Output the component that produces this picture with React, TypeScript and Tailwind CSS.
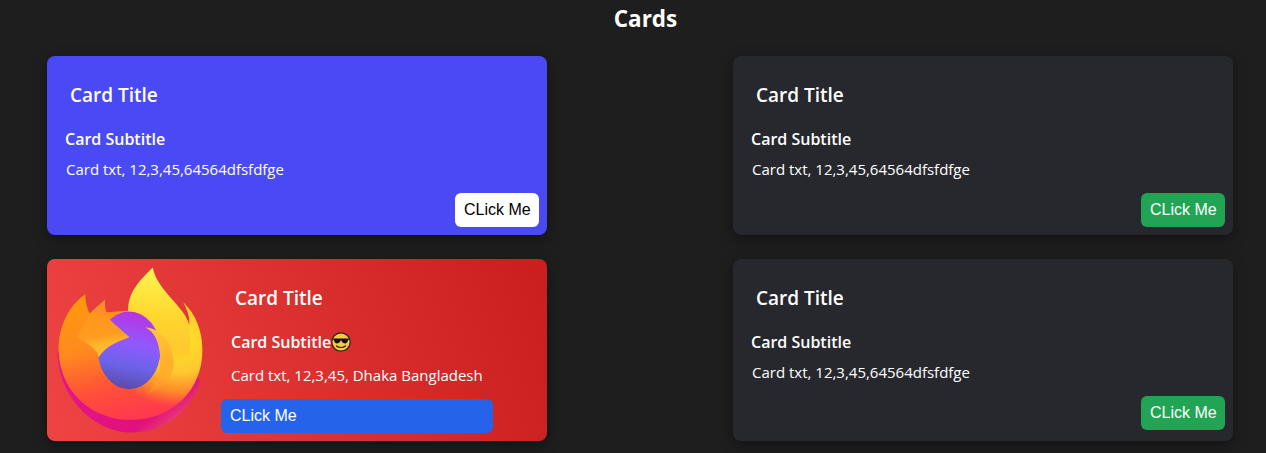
const BODY_FONT = "font-['Open_Sans','Noto_Sans',sans-serif]";

function FirefoxLogo() {
  return (
    <svg viewBox="50 45 445 510" className="h-[170px] w-[148px]">
      <defs>
        <linearGradient id="ffBase" x1="0.2" y1="0.4" x2="0.9" y2="0.9">
          <stop offset="0" stopColor="#e31587" />
          <stop offset="0.7" stopColor="#e0107c" />
          <stop offset="1" stopColor="#ef4f6e" />
        </linearGradient>
        <linearGradient id="ffBody" x1="0.3" y1="0" x2="0.55" y2="1">
          <stop offset="0" stopColor="#ff980e" />
          <stop offset="0.4" stopColor="#ff8a1e" />
          <stop offset="0.72" stopColor="#ff5038" />
          <stop offset="1" stopColor="#ff3750" />
        </linearGradient>
        <radialGradient id="ffGlow" cx="0.85" cy="0.35" r="0.55">
          <stop offset="0" stopColor="#ffe226" />
          <stop offset="0.5" stopColor="#ffc830" />
          <stop offset="0.78" stopColor="#ff9a26" stopOpacity="0.8" />
          <stop offset="1" stopColor="#ff8a1e" stopOpacity="0" />
        </radialGradient>
        <linearGradient id="ffFlame" x1="0.5" y1="0" x2="0.5" y2="1">
          <stop offset="0" stopColor="#fff44f" />
          <stop offset="0.4" stopColor="#ffd52e" />
          <stop offset="0.58" stopColor="#ffc830" stopOpacity="0.85" />
          <stop offset="0.72" stopColor="#ffb02a" stopOpacity="0" />
        </linearGradient>
        <linearGradient id="ffGlobe" x1="0.55" y1="0" x2="0.4" y2="1">
          <stop offset="0" stopColor="#b833e1" />
          <stop offset="0.4" stopColor="#9059ff" />
          <stop offset="0.7" stopColor="#6a63e8" />
          <stop offset="1" stopColor="#5b4aa8" />
        </linearGradient>
        <linearGradient id="ffWrap" x1="0.3" y1="0" x2="0.5" y2="1">
          <stop offset="0" stopColor="#ffc83a" />
          <stop offset="0.6" stopColor="#ffb02a" />
          <stop offset="1" stopColor="#ff9a26" stopOpacity="0.2" />
        </linearGradient>
        <linearGradient id="ffFox" x1="0.4" y1="0" x2="0.6" y2="1">
          <stop offset="0" stopColor="#ff961c" />
          <stop offset="0.5" stopColor="#ff9c20" />
          <stop offset="0.72" stopColor="#ffb82e" />
          <stop offset="1" stopColor="#ffbd2e" />
        </linearGradient>
      </defs>
      <path d="M52 305C52 440 160 548 275 548C370 548 450 490 480 395L440 300L100 300Z" fill="url(#ffBase)" />
      <path d="M135 132C85 165 52 235 55 305C60 430 160 512 275 510C395 510 488 420 487 300C487 240 465 190 430 157C445 185 450 205 448 225L300 180L148 190C138 170 135 150 135 132Z" fill="url(#ffBody)" />
      <path d="M135 132C85 165 52 235 55 305C60 430 160 512 275 510C395 510 488 420 487 300C487 240 465 190 430 157C445 185 450 205 448 225L300 180L148 190C138 170 135 150 135 132Z" fill="url(#ffGlow)" />
      <path d="M148 190C165 175 180 160 195 148C192 170 198 190 208 208L170 200Z" fill="#ff8f2a" />
      <path d="M338 52C300 90 262 125 264 185L267 425C330 460 420 430 448 340C452 300 450 260 448 225C435 170 350 120 338 52Z" fill="url(#ffFlame)" />
      <ellipse cx="267" cy="301" rx="94" ry="117" fill="url(#ffGlobe)" />
      <path d="M316 232C365 235 400 285 401 340C400 385 365 420 320 432C348 405 362 370 360 320C358 280 345 245 316 232Z" fill="url(#ffWrap)" />
      <path d="M148 190C175 188 195 195 205 205C225 225 250 245 268 262C235 275 200 285 175 322C172 300 150 285 108 262C118 245 135 210 148 190Z" fill="url(#ffFox)" />
    </svg>
  );
}

function SunglassesEmoji() {
  return (
    <svg viewBox="0 0 20 20" className="h-5 w-5 shrink-0" role="img" aria-label="😎">
      <circle cx="10" cy="10" r="9.2" fill="#fcc93f" stroke="#2a2118" strokeWidth="1.2" />
      <path d="M1.5 6.5H18.5V7.6L17 8C16.8 10.4 15.6 11.4 13.8 11.4C12 11.4 10.8 10.2 10.4 8.6H9.6C9.2 10.2 8 11.4 6.2 11.4C4.4 11.4 3.2 10.4 3 8L1.5 7.6Z" fill="#15131a" />
      <path d="M5.5 14C7.5 16 12.5 16 14.5 14" fill="none" stroke="#2a2118" strokeWidth="1.2" strokeLinecap="round" />
    </svg>
  );
}

function ClickButton({ className }: { className: string }) {
  return (
    <button className={`h-[34px] rounded-md px-[9px] text-left font-['Liberation_Sans',sans-serif] text-base whitespace-nowrap ${className}`}>
      CLick Me
    </button>
  );
}

function PlainCard({ className, buttonClass }: { className: string; buttonClass: string }) {
  return (
    <div className={`flex w-[500px] flex-col rounded-lg p-2 text-white shadow-[0_4px_14px_rgba(0,0,0,0.4)] ${className}`}>
      <h2 className="mt-[17px] ml-[15px] text-[19px] leading-7 font-semibold">Card Title</h2>
      <h3 className="mt-[18px] ml-[10px] text-base leading-6 font-semibold">Card Subtitle</h3>
      <p className="mt-[7px] ml-[10px] pl-px text-[15px] leading-[22px]">Card txt, 12,3,45,64564dfsfdfge</p>
      <div className="mt-[13px] flex justify-end">
        <ClickButton className={`w-[84px] ${buttonClass}`} />
      </div>
    </div>
  );
}

export default function App() {
  return (
    <div className={`h-[453px] overflow-hidden bg-[#1e1e1e] ${BODY_FONT}`}>
      <h1 className="pt-[5px] pl-[25px] text-center text-[22.5px] leading-7 font-bold text-white">Cards</h1>
      <div className="mt-[23px] flex flex-col gap-6 pr-[33px] pl-[47px]">
        <div className="flex justify-between">
          <PlainCard className="h-[179px] bg-[#4a4af5]" buttonClass="bg-white text-black" />
          <PlainCard className="h-[179px] bg-[#27282d]" buttonClass="bg-[#22a455] text-white" />
        </div>
        <div className="flex justify-between">
          <div className="flex h-[182px] w-[500px] rounded-lg bg-[linear-gradient(70deg,#ef4444,#c81e1e)] pt-[6px] pl-[10px] text-white shadow-[0_4px_14px_rgba(0,0,0,0.4)]">
            <div className="w-[164px] shrink-0">
              <FirefoxLogo />
            </div>
            <div className="flex w-[272px] flex-col">
              <h2 className="mt-[19px] ml-[14px] text-[19px] leading-7 font-semibold">Card Title</h2>
              <h3 className="mt-[18px] ml-[10px] flex items-center text-base leading-6 font-semibold">
                Card Subtitle
                <SunglassesEmoji />
              </h3>
              <p className="mt-[10px] ml-[10px] text-[15px] leading-[22px]">Card txt, 12,3,45, Dhaka Bangladesh</p>
              <ClickButton className="mt-[13px] w-[272px] bg-[#2563eb] text-white" />
            </div>
          </div>
          <PlainCard className="h-[182px] bg-[#27282d]" buttonClass="bg-[#22a455] text-white" />
        </div>
      </div>
    </div>
  );
}
